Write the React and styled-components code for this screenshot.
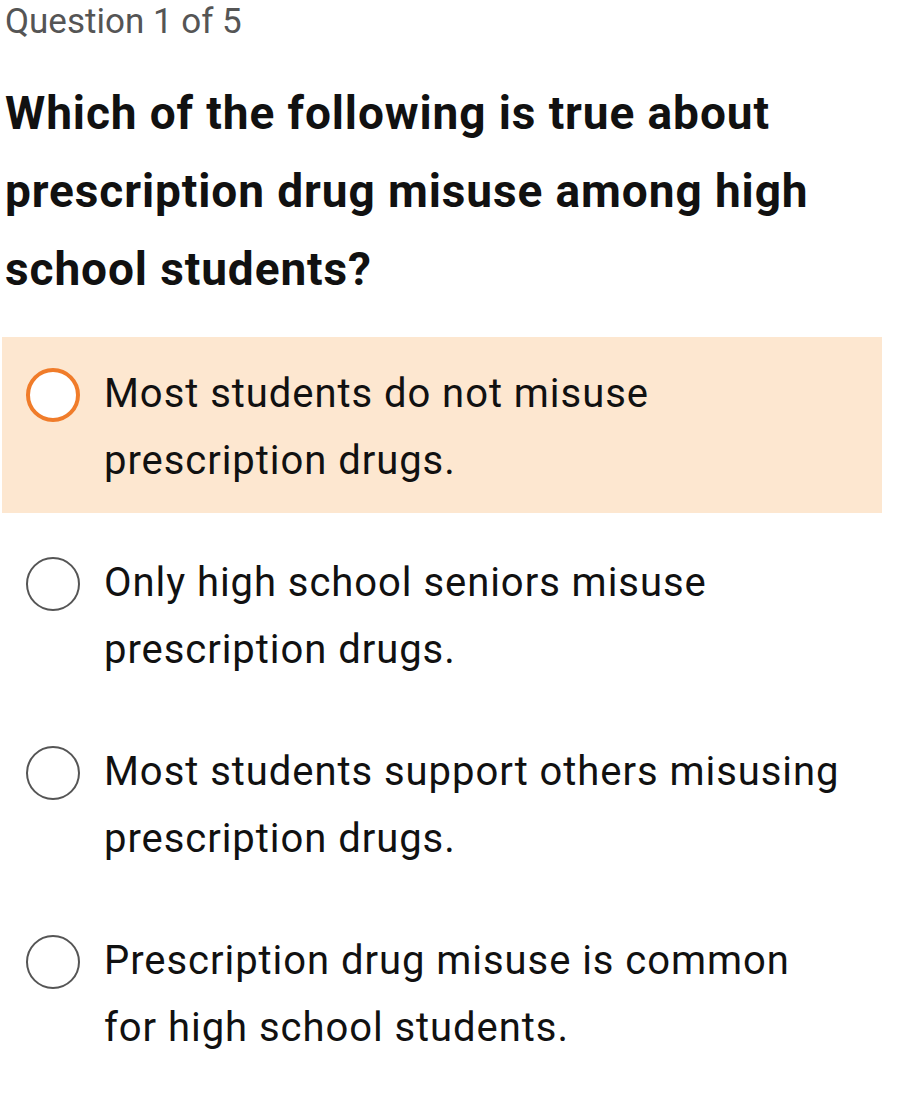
import React from "react";
import styled, { createGlobalStyle } from "styled-components";

const Global = createGlobalStyle`
  html, body { margin: 0; padding: 0; background: #fff; }
  body { font-family: Roboto, "Noto Sans", "Liberation Sans", sans-serif; }
`;

const Page = styled.div`
  width: 880px;
  margin-left: 2px;
  display: flex;
  flex-direction: column;
`;

const Counter = styled.div`
  font-size: 35px;
  line-height: 44px;
  color: #555;
  padding-left: 3px;
`;

const Heading = styled.h1`
  margin: 30px 0 29px;
  padding-left: 3px;
  font-size: 46px;
  line-height: 78px;
  font-weight: 700;
  letter-spacing: 0.9px;
  color: #111;
`;

const Options = styled.div`
  display: flex;
  flex-direction: column;
  gap: 13px;
`;

const Option = styled.div`
  display: flex;
  align-items: flex-start;
  gap: 24px;
  padding: 23px 20px 19px 24px;
  background: ${(p) => (p.$selected ? "#fde7d0" : "transparent")};
`;

const Radio = styled.span`
  flex: none;
  box-sizing: border-box;
  width: 54px;
  height: 54px;
  margin-top: 8px;
  border-radius: 50%;
  background: #fff;
  border: ${(p) => (p.$selected ? "4px solid #f07c2a" : "2.5px solid #555")};
`;

const Label = styled.div`
  font-size: 40px;
  line-height: 67px;
  letter-spacing: 0.95px;
  color: #111;
`;

const options = [
  ["Most students do not misuse", "prescription drugs."],
  ["Only high school seniors misuse", "prescription drugs."],
  ["Most students support others misusing", "prescription drugs."],
  ["Prescription drug misuse is common", "for high school students."],
];

export default function App() {
  return (
    <Page>
      <Global />
      <Counter>Question 1 of 5</Counter>
      <Heading>
        Which of the following is true about
        <br />
        prescription drug misuse among high
        <br />
        school students?
      </Heading>
      <Options>
        {options.map(([a, b], i) => (
          <Option key={i} $selected={i === 0}>
            <Radio $selected={i === 0} />
            <Label>
              {a}
              <br />
              {b}
            </Label>
          </Option>
        ))}
      </Options>
    </Page>
  );
}
